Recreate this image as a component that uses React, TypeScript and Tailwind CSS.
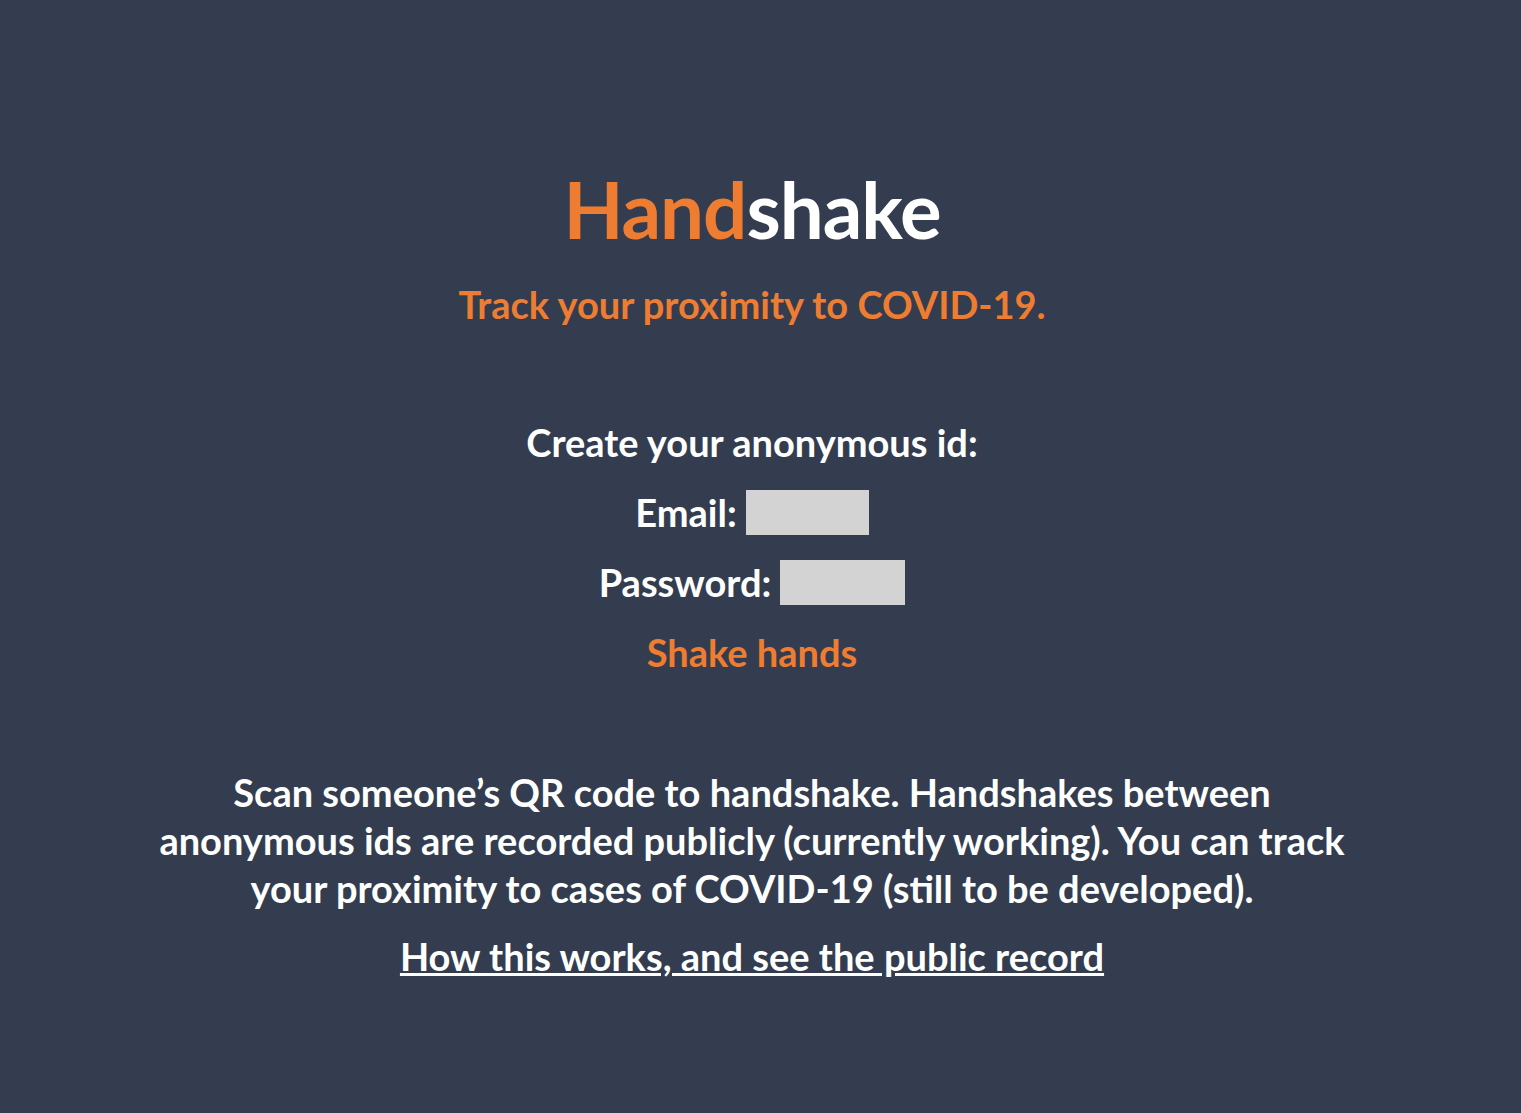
export default function App() {
  return (
    <div
      className="min-h-screen bg-[#333d4f] text-white font-bold flex flex-col items-center text-center pr-[17px]"
      style={{ fontFamily: 'Lato, "Noto Sans", sans-serif' }}
    >
      <h1 className="mt-[161px] text-[78px] leading-[96px] tracking-[-1px]">
        <span className="text-[#ee7d31]">Hand</span>shake
      </h1>
      <p className="mt-[23px] text-[38px] leading-[48px] text-[#ee7d31]">Track your proximity to COVID-19.</p>

      <div className="mt-[90px] flex flex-col items-center gap-[22px] text-[38px] leading-[48px]">
        <p>Create your anonymous id:</p>
        <label className="flex items-center gap-[9px]">
          Email:
          <input type="email" className="w-[123px] h-[45px] bg-[#d3d3d3] outline-none" />
        </label>
        <label className="flex items-center gap-[9px]">
          Password:
          <input type="password" className="w-[125px] h-[45px] bg-[#d3d3d3] outline-none" />
        </label>
        <button className="text-[#ee7d31] font-bold">Shake hands</button>
      </div>

      <p className="mt-[92px] max-w-[1200px] text-[38px] leading-[48px]">
        Scan someone’s QR code to handshake. Handshakes between anonymous ids are recorded publicly (currently
        working). You can track your proximity to cases of COVID-19 (still to be developed).
      </p>
      <a href="#" className="mt-[20px] text-[38px] leading-[48px] underline">
        How this works, and see the public record
      </a>
    </div>
  );
}
